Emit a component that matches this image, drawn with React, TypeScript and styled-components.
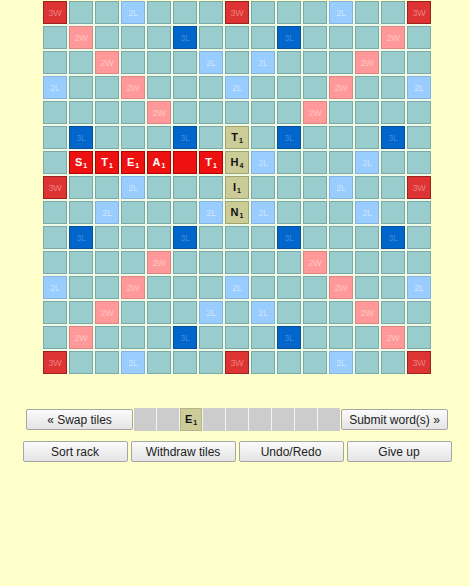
import styled, { createGlobalStyle } from 'styled-components';

const GlobalStyle = createGlobalStyle`
  html, body {
    margin: 0;
    padding: 0;
    background: #ffffcc;
    font-family: "Liberation Sans", Arial, sans-serif;
  }
`;

type Kind = 'plain' | 'dl' | 'tl' | 'dw' | 'tw';

const palette: Record<Kind, { bg: string; border: string; text: string }> = {
  plain: { bg: '#99cccc', border: '#7fa9a9', text: 'transparent' },
  dl: { bg: '#99ccff', border: '#86b3e0', text: '#cde5ff' },
  tl: { bg: '#0066cc', border: '#0a4f96', text: '#3f88d6' },
  dw: { bg: '#ff9999', border: '#e08585', text: '#ffc4c4' },
  tw: { bg: '#dd3333', border: '#9c2222', text: '#ee7f7f' },
};

const labels: Record<Kind, string> = {
  plain: '',
  dl: '2L',
  tl: '3L',
  dw: '2W',
  tw: '3W',
};

const Page = styled.div`
  width: 470px;
  padding: 1px 0 0 4px;
  box-sizing: border-box;
  display: flex;
  flex-direction: column;
  align-items: center;
`;

const Board = styled.div`
  display: grid;
  grid-template-columns: repeat(15, 24px);
  grid-auto-rows: 23px;
  gap: 2px;
  background: #eefbe6;
`;

const Cell = styled.div<{ $kind: Kind }>`
  box-sizing: border-box;
  border: 1px solid ${(p) => palette[p.$kind].border};
  background: ${(p) => palette[p.$kind].bg};
  color: ${(p) => palette[p.$kind].text};
  font-size: 9px;
  display: flex;
  align-items: center;
  justify-content: center;
  letter-spacing: -0.3px;
`;

const Tile = styled.div<{ $fresh?: boolean }>`
  box-sizing: border-box;
  border: 1px solid ${(p) => (p.$fresh ? '#b30000' : '#a3a36e')};
  background: ${(p) => (p.$fresh ? '#ee1111' : '#cccc99')};
  color: ${(p) => (p.$fresh ? '#ffffff' : '#111111')};
  font-size: 11px;
  font-weight: bold;
  display: flex;
  align-items: center;
  justify-content: center;
  padding-bottom: 2px;
`;

const Score = styled.span`
  font-size: 7px;
  font-weight: bold;
  position: relative;
  top: 4px;
  margin-left: 1px;
`;

const RackRow = styled.div`
  margin-top: 34px;
  display: flex;
  align-items: center;
  gap: 1px;
`;

const Rack = styled.div`
  display: flex;
  gap: 1px;
  background: #f4f4ec;
`;

const Slot = styled.div`
  width: 22px;
  height: 23px;
  background: #cccccc;
`;

const RackTile = styled(Tile)`
  width: 22px;
  height: 23px;
  border-color: #b5b588;
  color: #111111;
`;

const ButtonRow = styled.div`
  margin-top: 10px;
  display: flex;
  gap: 3px;
`;

const Button = styled.button<{ $w?: number }>`
  width: ${(p) => p.$w ?? 105}px;
  height: 21px;
  padding: 0;
  border: 1px solid #a6a6a6;
  border-radius: 2px;
  background: linear-gradient(#fbfbfb, #e4e4e4);
  color: #222222;
  font-family: "Liberation Sans", Arial, sans-serif;
  font-size: 12px;
  cursor: pointer;
`;

const TW = ['0,0', '0,7', '0,14', '7,0', '7,14', '14,0', '14,7', '14,14'];
const TL = ['1,5', '1,9', '5,1', '5,5', '5,9', '5,13', '9,1', '9,5', '9,9', '9,13', '13,5', '13,9'];
const DL = [
  '0,3', '0,11', '2,6', '2,8', '3,0', '3,7', '3,14', '6,2', '6,6', '6,8', '6,12', '7,3',
  '7,11', '8,2', '8,6', '8,8', '8,12', '11,0', '11,7', '11,14', '12,6', '12,8', '14,3', '14,11',
];

function kindOf(r: number, c: number): Kind {
  const key = `${r},${c}`;
  if (TW.includes(key)) return 'tw';
  if (TL.includes(key)) return 'tl';
  if (DL.includes(key)) return 'dl';
  if ((r === c || r + c === 14) && r !== 7 && (r < 5 || r > 9)) return 'dw';
  return 'plain';
}

const tiles: Record<string, { letter: string; value: string; fresh?: boolean }> = {
  '5,7': { letter: 'T', value: '1' },
  '6,7': { letter: 'H', value: '4' },
  '7,7': { letter: 'I', value: '1' },
  '8,7': { letter: 'N', value: '1' },
  '6,1': { letter: 'S', value: '1', fresh: true },
  '6,2': { letter: 'T', value: '1', fresh: true },
  '6,3': { letter: 'E', value: '1', fresh: true },
  '6,4': { letter: 'A', value: '1', fresh: true },
  '6,5': { letter: '', value: '', fresh: true },
  '6,6': { letter: 'T', value: '1', fresh: true },
};

const rack = ['', '', 'E', '', '', '', '', '', ''];

export default function App() {
  const cells = [];
  for (let r = 0; r < 15; r++) {
    for (let c = 0; c < 15; c++) {
      const t = tiles[`${r},${c}`];
      if (t) {
        cells.push(
          <Tile key={`${r}-${c}`} $fresh={t.fresh}>
            {t.letter}
            {t.value && <Score>{t.value}</Score>}
          </Tile>
        );
      } else {
        const k = kindOf(r, c);
        cells.push(
          <Cell key={`${r}-${c}`} $kind={k}>
            {labels[k]}
          </Cell>
        );
      }
    }
  }

  return (
    <>
      <GlobalStyle />
      <Page>
        <Board>{cells}</Board>
        <RackRow>
          <Button $w={107}>« Swap tiles</Button>
          <Rack>
            {rack.map((l, i) =>
              l ? (
                <RackTile key={i}>
                  {l}
                  <Score>1</Score>
                </RackTile>
              ) : (
                <Slot key={i} />
              )
            )}
          </Rack>
          <Button $w={107}>Submit word(s) »</Button>
        </RackRow>
        <ButtonRow>
          <Button>Sort rack</Button>
          <Button>Withdraw tiles</Button>
          <Button>Undo/Redo</Button>
          <Button>Give up</Button>
        </ButtonRow>
      </Page>
    </>
  );
}
